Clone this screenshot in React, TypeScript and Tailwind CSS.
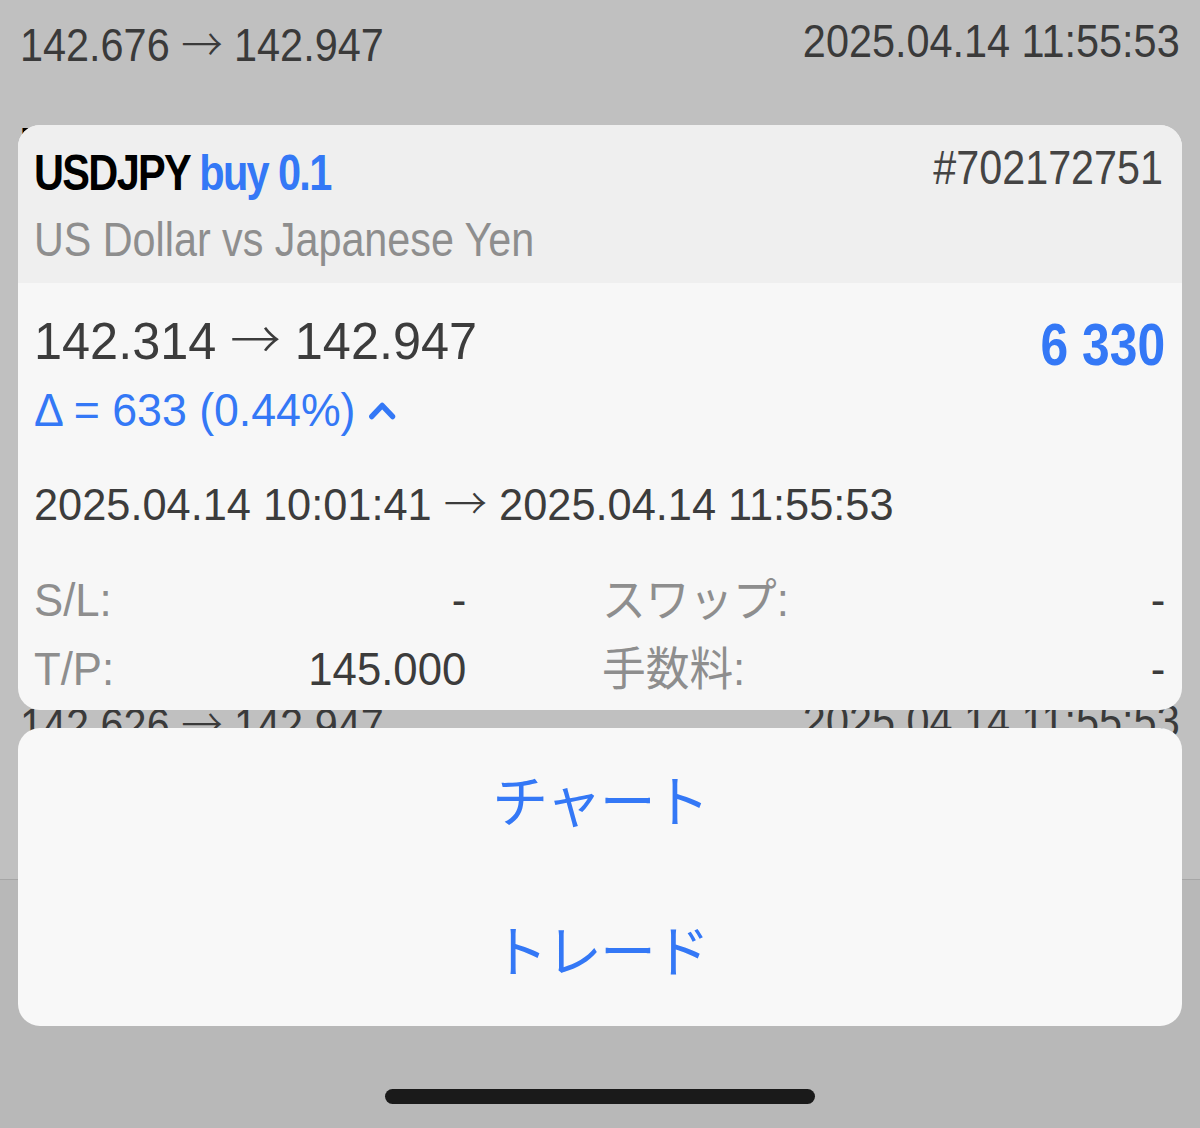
import React from "react";

const SANS = { fontFamily: '"Liberation Sans", "Noto Sans CJK JP", sans-serif' };
const CJK = { fontFamily: '"Noto Sans CJK JP", "Liberation Sans", sans-serif' };

function Arrow() {
  return <span className="font-light" style={CJK}>→</span>;
}

function BgRow({ price, date, title = true }: { price: string[]; date: string; title?: boolean }) {
  return (
    <div className="h-[170px] flex flex-col shrink-0">
      <div className="mt-[4px] h-[50px] leading-[50px] text-[50px] font-bold tracking-[-2px] text-black whitespace-nowrap" style={SANS}>
        {title ? (
          <span className="inline-block origin-left scale-x-[0.83]">
            USDJPY <span className="text-[#3478f6]">buy 0.1</span>
          </span>
        ) : null}
      </div>
      <div className="mt-[16px] h-[48px] leading-[48px] text-[46px] text-[#3a3a3a] flex justify-between whitespace-nowrap" style={SANS}>
        <span className="inline-block origin-left scale-x-[0.9]">
          {price[0]} <Arrow /> {price[1]}
        </span>
        <span className="inline-block origin-right scale-x-[0.9]">{date}</span>
      </div>
    </div>
  );
}

export default function App() {
  return (
    <div className="relative w-[1200px] h-[1128px] overflow-hidden bg-[#c0c0c0]">
      {/* dimmed background list */}
      <div className="flex flex-col h-full">
        <div className="h-[879px] overflow-hidden px-5">
          <div className="-mt-[53px] flex flex-col">
            <BgRow title={false} price={["142.676", "142.947"]} date="2025.04.14 11:55:53" />
            <BgRow price={["142.512", "142.947"]} date="2025.04.14 11:55:53" />
            <BgRow price={["142.480", "142.947"]} date="2025.04.14 11:55:53" />
            <BgRow price={["142.391", "142.947"]} date="2025.04.14 11:55:53" />
            <BgRow price={["142.626", "142.947"]} date="2025.04.14 11:55:53" />
          </div>
        </div>
        <div className="flex-1 border-t border-[#a6a6a6] bg-[#b8b8b8] flex flex-col justify-end pb-[24px]">
          <div className="mx-auto w-[430px] h-[15px] rounded-full bg-[#1a1a1a]" />
        </div>
      </div>

      {/* overlay sheet */}
      <div className="absolute left-[18px] right-[18px] top-[125px] flex flex-col gap-[18px]">
        <div className="h-[585px] rounded-[22px] overflow-hidden bg-[#f7f7f7] flex flex-col">
          <div className="h-[158px] bg-[#efefef] pl-4 pr-[19px] pt-[19px]">
            <div className="flex justify-between items-start h-[54px] whitespace-nowrap">
              <div className="mt-[4px] h-[50px] leading-[50px] text-[50px] font-bold tracking-[-2px] text-black" style={SANS}>
                <span className="inline-block origin-left scale-x-[0.83]">
                  USDJPY <span className="text-[#3478f6]">buy 0.1</span>
                </span>
              </div>
              <div className="h-[48px] leading-[48px] text-[48px] text-[#444444]" style={SANS}>
                <span className="inline-block origin-right scale-x-[0.86]">#702172751</span>
              </div>
            </div>
            <div className="mt-[18px] h-[48px] leading-[48px] text-[48px] text-[#8e8e8e] whitespace-nowrap" style={SANS}>
              <span className="inline-block origin-left scale-x-[0.86]">US Dollar vs Japanese Yen</span>
            </div>
          </div>
          <div className="pl-4 pr-[17px] pt-[28px] whitespace-nowrap" style={SANS}>
            <div className="flex justify-between items-start h-[52px]">
              <div className="h-[52px] leading-[52px] text-[52px] text-[#3c3c3c]">
                <span className="inline-block origin-left scale-x-[0.97]">
                  142.314 <Arrow /> 142.947
                </span>
              </div>
              <div className="mt-[4px] h-[60px] leading-[60px] text-[60px] font-bold text-[#3478f6]">
                <span className="inline-block origin-right scale-x-[0.83]">6 330</span>
              </div>
            </div>
            <div className="mt-[23px] h-[47px] leading-[47px] text-[47px] text-[#3478f6]">
              <span className="inline-flex items-center origin-left scale-x-[0.95]">
                <span>Δ = 633 (0.44%)</span>
                <svg className="ml-[14px] mt-[2px]" width="29" height="19" viewBox="0 0 29 19">
                  <polyline points="3.5,15.5 14.5,4.5 25.5,15.5" fill="none" stroke="#3478f6" strokeWidth="5.5" strokeLinecap="round" strokeLinejoin="round" />
                </svg>
              </span>
            </div>
            <div className="mt-[46px] h-[44px] leading-[44px] text-[44px] text-[#3c3c3c]">
              <span className="inline-block origin-left scale-x-[0.985]">
                2025.04.14 10:01:41 <Arrow /> 2025.04.14 11:55:53
              </span>
            </div>
            <div className="mt-[54px] grid grid-cols-[432px_1fr] gap-x-[136px] gap-y-[23px] text-[46px] leading-[46px]">
              <div className="flex justify-between h-[46px]">
                <span className="inline-block origin-left scale-x-[0.95] text-[#8e8e8e]">S/L:</span>
                <span className="inline-block origin-right scale-x-[0.95] text-[#3c3c3c]">-</span>
              </div>
              <div className="flex justify-between h-[46px]">
                <span className="inline-block origin-left scale-x-[0.95] text-[#8e8e8e]">スワップ:</span>
                <span className="inline-block origin-right scale-x-[0.95] text-[#3c3c3c]">-</span>
              </div>
              <div className="flex justify-between h-[46px]">
                <span className="inline-block origin-left scale-x-[0.95] text-[#8e8e8e]">T/P:</span>
                <span className="inline-block origin-right scale-x-[0.95] text-[#3c3c3c]">145.000</span>
              </div>
              <div className="flex justify-between h-[46px]">
                <span className="inline-block origin-left scale-x-[0.95] text-[#8e8e8e]">手数料:</span>
                <span className="inline-block origin-right scale-x-[0.95] text-[#3c3c3c]">-</span>
              </div>
            </div>
          </div>
        </div>

        <div className="h-[298px] rounded-[22px] overflow-hidden bg-[#f8f8f8] flex flex-col">
          <div className="h-[149px] pb-[10px] flex items-center justify-center text-[56px] text-[#3478f6] tracking-[-2px]" style={CJK}>
            チャート
          </div>
          <div className="h-[149px] pb-[8px] flex items-center justify-center text-[56px] text-[#3478f6] tracking-[-2px]" style={CJK}>
            トレード
          </div>
        </div>
      </div>
    </div>
  );
}
